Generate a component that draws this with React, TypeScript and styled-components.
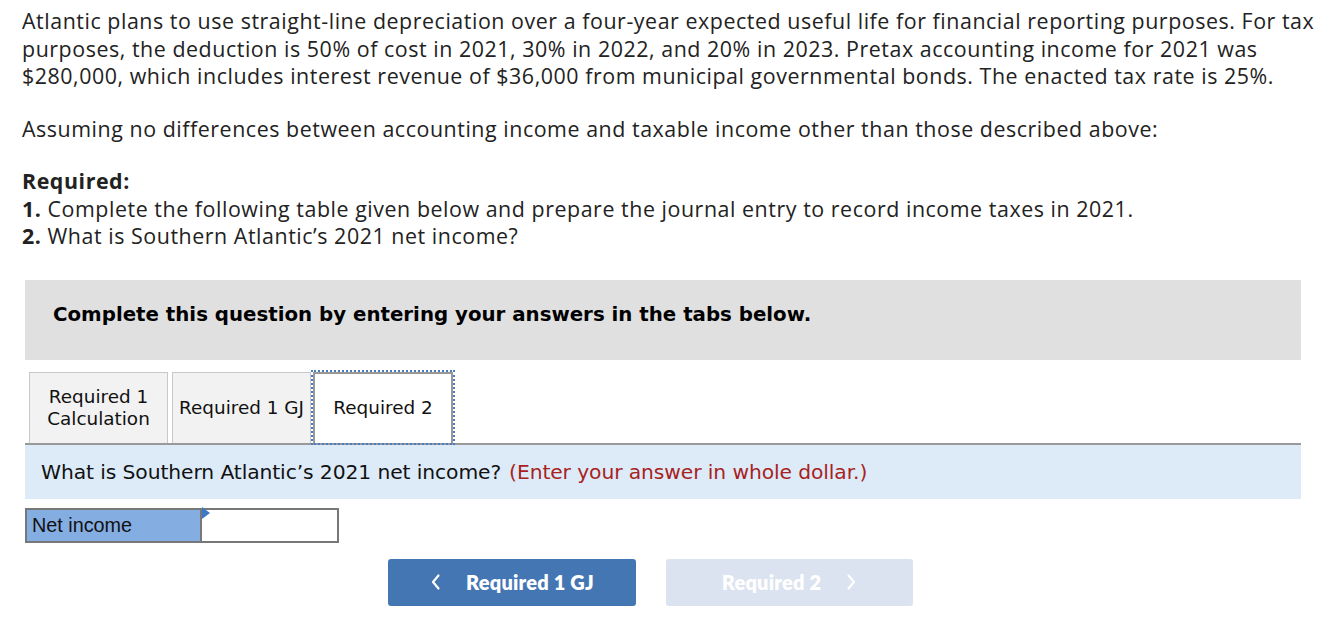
import { createGlobalStyle } from 'styled-components';
import styled from 'styled-components';

const Global = createGlobalStyle`
  html, body { margin: 0; padding: 0; background: #fff; }
  body { font-family: "Open Sans", Lato, sans-serif; color: #222; }
`;

const Page = styled.div`
  padding: 7px 0 0 22px;
  width: 1330px;
  box-sizing: border-box;
`;

const Para = styled.p<{ $gap?: number }>`
  margin: 0 0 ${p => p.$gap ?? 25}px 0;
  font-size: 21.4px;
  line-height: 27.5px;
  letter-spacing: 0.55px;
  white-space: nowrap;
`;

const Strong = styled.b`
  font-weight: 700;
`;

const Section = styled.div`
  margin-left: 3px;
  width: 1276px;
`;

const Banner = styled.div`
  height: 80px;
  background: #e0e0e0;
  display: flex;
  align-items: center;
  padding: 0 0 11px 28px;
  box-sizing: border-box;
  font-family: "DejaVu Sans", Verdana, sans-serif;
  font-weight: 700;
  font-size: 19.8px;
  color: #000;
`;

const TabRow = styled.div`
  display: flex;
  align-items: flex-end;
  gap: 4px;
  margin-top: 12px;
  padding-left: 4px;
  border-bottom: 2px solid #999;
`;

const Tab = styled.div<{ $active?: boolean }>`
  box-sizing: border-box;
  height: 71px;
  width: ${p => (p.$active ? 140 : 139)}px;
  display: flex;
  align-items: center;
  justify-content: center;
  text-align: center;
  font-family: "DejaVu Sans", Verdana, sans-serif;
  font-size: 18.4px;
  line-height: 22px;
  color: #111;
  white-space: nowrap;
  background: ${p => (p.$active ? '#fff' : '#f2f2f2')};
  border: ${p => (p.$active ? '2px solid #999' : '1.5px solid #c8c8c8')};
  border-bottom: none;
  outline: ${p => (p.$active ? '2px dotted #4a7cc4' : 'none')};
  margin-left: ${p => (p.$active ? '-2px' : '0')};
`;

const Prompt = styled.div`
  height: 54px;
  background: #ddebf8;
  display: flex;
  align-items: center;
  padding-left: 16px;
  font-family: "DejaVu Sans", Verdana, sans-serif;
  font-size: 20.3px;
  color: #111;
  letter-spacing: -0.1px;
  white-space: nowrap;
`;

const Hint = styled.span`
  color: #a82222;
  margin-left: 8px;
`;

const AnswerTable = styled.div`
  margin-top: 9px;
  display: flex;
  width: 314px;
  height: 35px;
  border: 2px solid #777;
  box-sizing: border-box;
`;

const LabelCell = styled.div`
  box-sizing: border-box;
  width: 175px;
  background: #84ade2;
  border-right: 2px solid #777;
  display: flex;
  align-items: center;
  padding-left: 5px;
  font-family: "Liberation Sans", Arial, sans-serif;
  font-size: 19.8px;
  color: #111;
`;

const InputCell = styled.div`
  position: relative;
  flex: 1;
  background: #fff;
`;

const Marker = styled.span`
  position: absolute;
  top: 0;
  left: 0;
  width: 0;
  height: 0;
  border-top: 6px solid transparent;
  border-bottom: 6px solid transparent;
  border-left: 8px solid #3d78c4;
  transform: translateY(-3px);
`;

const NavRow = styled.div`
  display: flex;
  gap: 30px;
  margin: 16px 0 0 363px;
`;

const NavButton = styled.div<{ $disabled?: boolean }>`
  width: ${p => (p.$disabled ? 247 : 248)}px;
  height: 47px;
  border-radius: 3px;
  background: ${p => (p.$disabled ? '#dae3ef' : '#4476b3')};
  color: #fff;
  display: flex;
  align-items: center;
  justify-content: center;
  gap: 24px;
  font-family: Lato, Inter, sans-serif;
  font-weight: 800;
  font-size: 20px;
  letter-spacing: 0.2px;
`;

const Chevron = ({ dir }: { dir: 'left' | 'right' }) => (
  <svg width={12} height={18} viewBox="0 0 12 18" fill="none">
    <path
      d={dir === 'left' ? 'M8.5 2.5 L3 9 L8.5 15.5' : 'M3.5 2.5 L9 9 L3.5 15.5'}
      stroke="#fff"
      strokeWidth={2.2}
      strokeLinecap="round"
      strokeLinejoin="round"
    />
  </svg>
);

export default function App() {
  return (
    <>
      <Global />
      <Page>
        <Para>
          Atlantic plans to use straight-line depreciation over a four-year expected useful life for financial reporting purposes. For tax
          <br />
          purposes, the deduction is 50% of cost in 2021, 30% in 2022, and 20% in 2023. Pretax accounting income for 2021 was
          <br />
          $280,000, which includes interest revenue of $36,000 from municipal governmental bonds. The enacted tax rate is 25%.
        </Para>
        <Para>Assuming no differences between accounting income and taxable income other than those described above:</Para>
        <Para $gap={30}>
          <Strong>Required:</Strong>
          <br />
          <Strong>1.</Strong> Complete the following table given below and prepare the journal entry to record income taxes in 2021.
          <br />
          <Strong>2.</Strong> What is Southern Atlantic’s 2021 net income?
        </Para>
        <Section>
          <Banner>Complete this question by entering your answers in the tabs below.</Banner>
          <TabRow>
            <Tab>
              Required 1<br />
              Calculation
            </Tab>
            <Tab>Required 1 GJ</Tab>
            <Tab $active>Required 2</Tab>
          </TabRow>
          <Prompt>
            What is Southern Atlantic’s 2021 net income?<Hint>(Enter your answer in whole dollar.)</Hint>
          </Prompt>
          <AnswerTable>
            <LabelCell>Net income</LabelCell>
            <InputCell>
              <Marker />
            </InputCell>
          </AnswerTable>
          <NavRow>
            <NavButton>
              <Chevron dir="left" />
              Required 1 GJ
            </NavButton>
            <NavButton $disabled>
              Required 2
              <Chevron dir="right" />
            </NavButton>
          </NavRow>
        </Section>
      </Page>
    </>
  );
}
